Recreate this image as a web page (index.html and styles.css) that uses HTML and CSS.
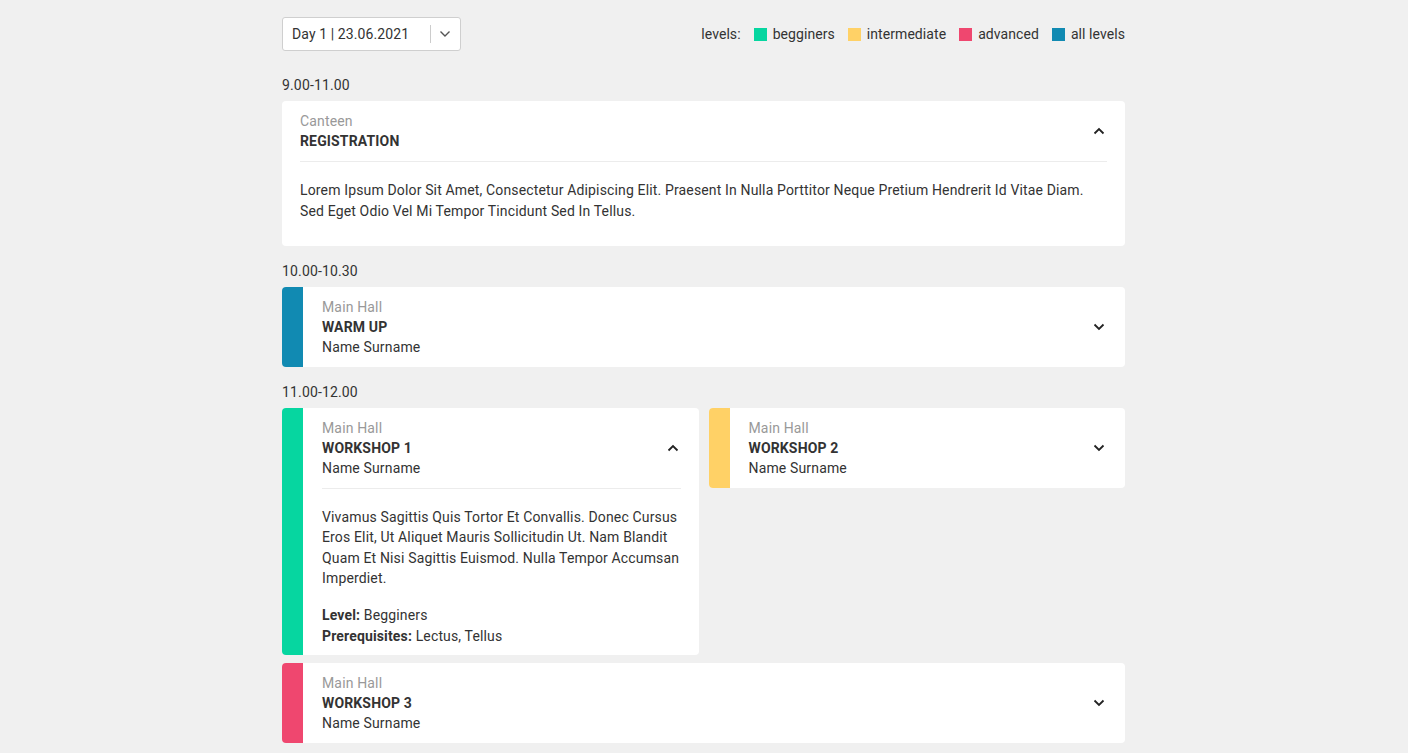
FILE: index.html
```html
<!DOCTYPE html>
<html>
<head>
<meta charset="utf-8">
<link rel="stylesheet" href="styles.css">
</head>
<body>
<div class="page">
  <div class="topbar">
    <div class="select">
      <span class="select-label">Day 1 | 23.06.2021</span>
      <span class="select-sep"></span>
      <svg class="select-chev" width="12" height="8" viewBox="0 0 12 8"><path d="M1.5 1.5 L6 6 L10.5 1.5" fill="none" stroke="#555" stroke-width="1.4"/></svg>
    </div>
    <div class="legend">
      <span class="legend-title">levels:</span>
      <span class="legend-item"><i class="sq green"></i>begginers</span>
      <span class="legend-item"><i class="sq yellow"></i>intermediate</span>
      <span class="legend-item"><i class="sq red"></i>advanced</span>
      <span class="legend-item"><i class="sq blue"></i>all levels</span>
    </div>
  </div>

  <div class="slot">
    <div class="time">9.00-11.00</div>
    <div class="row">
      <div class="card plain open">
        <div class="card-main">
          <div class="head">
            <div class="head-text">
              <div class="loc">Canteen</div>
              <div class="title">REGISTRATION</div>
            </div>
            <svg class="chev" width="12" height="8" viewBox="0 0 12 8"><path d="M1.5 6.5 L6 2 L10.5 6.5" fill="none" stroke="#222" stroke-width="1.8"/></svg>
          </div>
          <div class="body">
            <p>Lorem Ipsum Dolor Sit Amet, Consectetur Adipiscing Elit. Praesent In Nulla Porttitor Neque Pretium Hendrerit Id Vitae Diam. Sed Eget Odio Vel Mi Tempor Tincidunt Sed In Tellus.</p>
          </div>
        </div>
      </div>
    </div>
  </div>

  <div class="slot">
    <div class="time">10.00-10.30</div>
    <div class="row">
      <div class="card">
        <div class="bar blue"></div>
        <div class="card-main">
          <div class="head">
            <div class="head-text">
              <div class="loc">Main Hall</div>
              <div class="title">WARM UP</div>
              <div class="name">Name Surname</div>
            </div>
            <svg class="chev" width="12" height="8" viewBox="0 0 12 8"><path d="M1.5 1.5 L6 6 L10.5 1.5" fill="none" stroke="#222" stroke-width="1.8"/></svg>
          </div>
        </div>
      </div>
    </div>
  </div>

  <div class="slot">
    <div class="time">11.00-12.00</div>
    <div class="row">
      <div class="card open">
        <div class="bar green"></div>
        <div class="card-main">
          <div class="head">
            <div class="head-text">
              <div class="loc">Main Hall</div>
              <div class="title">WORKSHOP 1</div>
              <div class="name">Name Surname</div>
            </div>
            <svg class="chev" width="12" height="8" viewBox="0 0 12 8"><path d="M1.5 6.5 L6 2 L10.5 6.5" fill="none" stroke="#222" stroke-width="1.8"/></svg>
          </div>
          <div class="body">
            <p>Vivamus Sagittis Quis Tortor Et Convallis. Donec Cursus Eros Elit, Ut Aliquet Mauris Sollicitudin Ut. Nam Blandit Quam Et Nisi Sagittis Euismod. Nulla Tempor Accumsan Imperdiet.</p>
            <div class="meta"><b>Level:</b> Begginers</div>
            <div class="meta"><b>Prerequisites:</b> Lectus, Tellus</div>
          </div>
        </div>
      </div>
      <div class="card">
        <div class="bar yellow"></div>
        <div class="card-main">
          <div class="head">
            <div class="head-text">
              <div class="loc">Main Hall</div>
              <div class="title">WORKSHOP 2</div>
              <div class="name">Name Surname</div>
            </div>
            <svg class="chev" width="12" height="8" viewBox="0 0 12 8"><path d="M1.5 1.5 L6 6 L10.5 1.5" fill="none" stroke="#222" stroke-width="1.8"/></svg>
          </div>
        </div>
      </div>
    </div>
    <div class="row">
      <div class="card">
        <div class="bar red"></div>
        <div class="card-main">
          <div class="head">
            <div class="head-text">
              <div class="loc">Main Hall</div>
              <div class="title">WORKSHOP 3</div>
              <div class="name">Name Surname</div>
            </div>
            <svg class="chev" width="12" height="8" viewBox="0 0 12 8"><path d="M1.5 1.5 L6 6 L10.5 1.5" fill="none" stroke="#222" stroke-width="1.8"/></svg>
          </div>
        </div>
      </div>
    </div>
  </div>
</div>
</body>
</html>
```

FILE: styles.css
```css
* { box-sizing: border-box; }
html, body { margin: 0; padding: 0; }
body {
  background: #f0f0f0;
  font-family: Roboto, "Liberation Sans", sans-serif;
  font-size: 14px;
  color: #333;
  line-height: 20px;
  letter-spacing: 0.15px;
}
.page {
  width: 843px;
  margin-left: calc(50% - 422px);
  padding-top: 17px;
  padding-bottom: 20px;
}
.topbar {
  display: flex;
  justify-content: space-between;
  align-items: center;
  margin-bottom: 24px;
}
.select {
  width: 179px;
  height: 34px;
  background: #fff;
  border: 1px solid #cfcfcf;
  border-radius: 3px;
  display: flex;
  align-items: center;
  padding-left: 9px;
}
.select-label { color: #333; letter-spacing: 0.1px; }
.select-sep {
  width: 1px;
  height: 18px;
  background: #ccc;
  margin-left: auto;
}
.select-chev { margin: 0 9px 0 8px; }
.legend {
  display: flex;
  align-items: center;
  gap: 13px;
  color: #333;
  letter-spacing: 0.07px;
}
.legend-item { display: flex; align-items: center; gap: 6px; }
.sq { display: inline-block; width: 13px; height: 13px; }
.green { background: #06d6a0; }
.yellow { background: #ffd166; }
.red { background: #ef476f; }
.blue { background: #118ab2; }

.slot { margin-bottom: 15px; }
.time { margin-bottom: 6px; }
.row { display: flex; gap: 10px; align-items: flex-start; }
.row + .row { margin-top: 8px; }
.card {
  flex: 1;
  background: #fff;
  border-radius: 4px;
  overflow: hidden;
  display: flex;
}
.bar { width: 21px; flex: none; }
.card-main { flex: 1; padding: 0 18px; min-width: 0; }
.card:not(.plain) .card-main { padding-left: 19px; }
.head {
  display: flex;
  align-items: center;
  padding: 10px 0;
}
.head-text { flex: 1; }
.loc { color: #999; }
.title { font-weight: 700; }
.chev { flex: none; margin-right: 2px; }
.open .head { border-bottom: 1px solid #ececec; }
.body { padding: 18px 0 8.4px; line-height: 20.4px; }
.plain .body { line-height: 21px; padding-bottom: 8px; }
.body p { margin: 0 0 16px; }
.meta { line-height: 21px; }
.meta b { font-weight: 700; }
```
